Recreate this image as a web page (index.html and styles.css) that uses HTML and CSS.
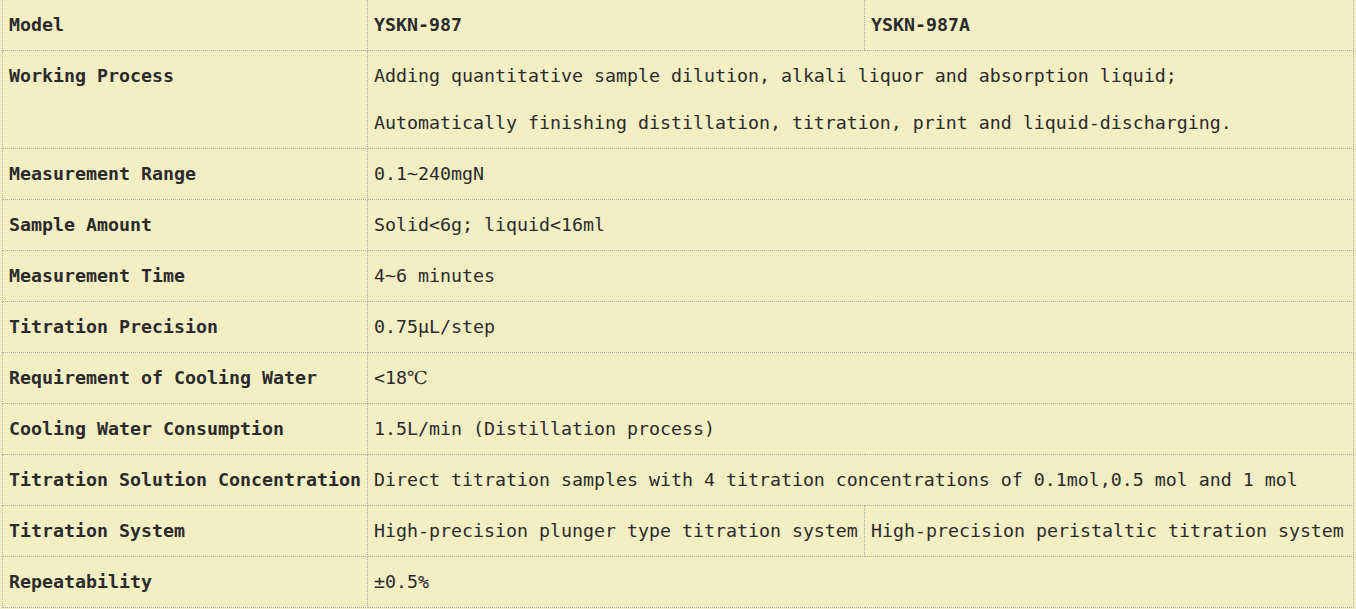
FILE: index.html
```html
<!DOCTYPE html>
<html lang="en">
<head>
<meta charset="utf-8">
<title>YSKN-987 Specifications</title>
<link rel="stylesheet" href="styles.css">
</head>
<body>
<table class="spec">
  <colgroup>
    <col class="c1">
    <col class="c2">
    <col class="c3">
  </colgroup>
  <tbody>
    <tr class="head">
      <td class="label">Model</td>
      <td>YSKN-987</td>
      <td>YSKN-987A</td>
    </tr>
    <tr>
      <td class="label top">Working Process</td>
      <td colspan="2">
        <p>Adding quantitative sample dilution, alkali liquor and absorption liquid;</p>
        <p class="next">Automatically finishing distillation, titration, print and liquid-discharging.</p>
      </td>
    </tr>
    <tr>
      <td class="label">Measurement Range</td>
      <td colspan="2">0.1~240mgN</td>
    </tr>
    <tr>
      <td class="label">Sample Amount</td>
      <td colspan="2">Solid&lt;6g; liquid&lt;16ml</td>
    </tr>
    <tr>
      <td class="label">Measurement Time</td>
      <td colspan="2">4~6 minutes</td>
    </tr>
    <tr>
      <td class="label">Titration Precision</td>
      <td colspan="2">0.75μL/step</td>
    </tr>
    <tr>
      <td class="label">Requirement of Cooling Water</td>
      <td colspan="2">&lt;18<span class="unit">℃</span></td>
    </tr>
    <tr>
      <td class="label">Cooling Water Consumption</td>
      <td colspan="2">1.5L/min (Distillation process)</td>
    </tr>
    <tr>
      <td class="label">Titration Solution Concentration</td>
      <td colspan="2">Direct titration samples with 4 titration concentrations of 0.1mol,0.5 mol and 1 mol</td>
    </tr>
    <tr>
      <td class="label">Titration System</td>
      <td>High-precision plunger type titration system</td>
      <td>High-precision peristaltic titration system</td>
    </tr>
    <tr>
      <td class="label">Repeatability</td>
      <td colspan="2">±0.5%</td>
    </tr>
  </tbody>
</table>
</body>
</html>
```
FILE: styles.css
```css
html, body {
  margin: 0;
  padding: 0;
  background: #f3eec4;
}

.spec {
  margin: -1px 0 0 2px;
  width: 1351px;
  table-layout: fixed;
  border-collapse: collapse;
  background: #f3eec4;
  font-family: "DejaVu Sans Mono", "Liberation Mono", monospace;
  font-size: 18.27px;
  line-height: 26px;
  color: #2b2b2b;
}

.c1 { width: 365px; }
.c2 { width: 497px; }
.c3 { width: 489px; }

.spec td {
  border: 1px dotted #a9a9a9;
  padding: 12px 6px;
  vertical-align: middle;
  white-space: nowrap;
  overflow: hidden;
}

.spec td.label {
  font-weight: bold;
}

.spec td.top {
  vertical-align: top;
}

.spec tr.head td {
  font-weight: bold;
}

.spec p {
  margin: 0;
}

.spec p.next {
  margin-top: 21px;
}

.unit {
  font-family: "Liberation Serif", "DejaVu Serif", serif;
}
```
